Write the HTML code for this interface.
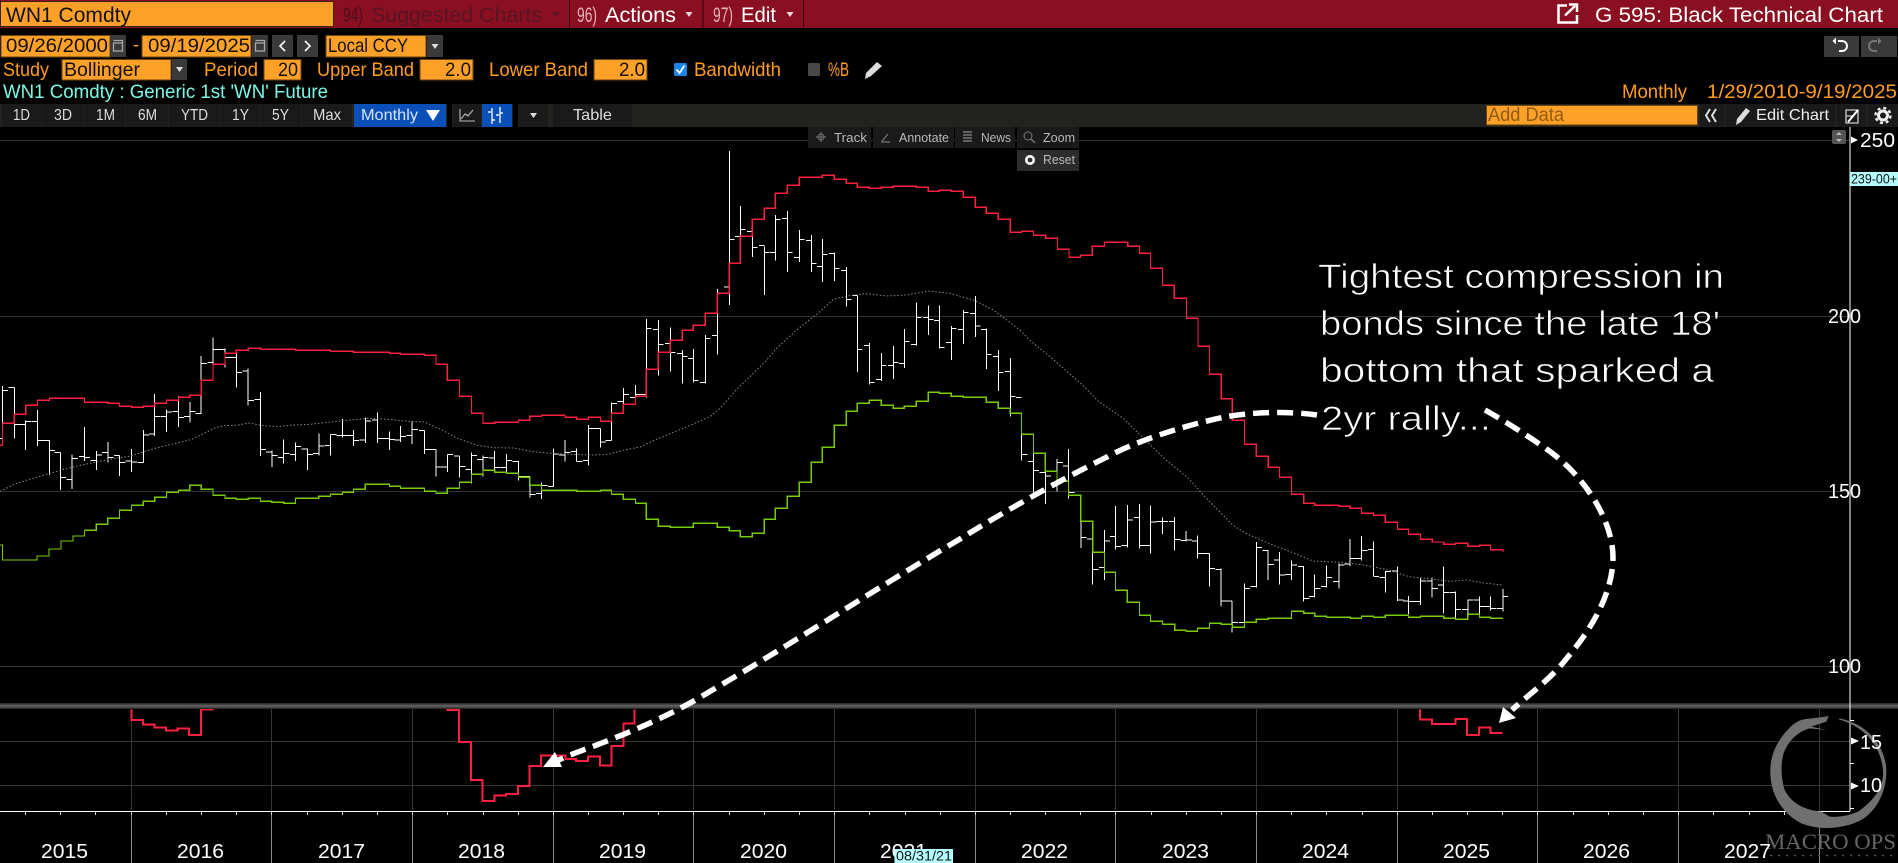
<!DOCTYPE html>
<html lang="en"><head><meta charset="utf-8"><title>G 595: Black Technical Chart</title>
<style>
html,body{margin:0;padding:0;background:#000;width:1898px;height:863px;overflow:hidden}
#w{width:1898px;height:863px;overflow:hidden;position:relative}
svg{display:block}
text{font-family:"Liberation Sans",Arial,sans-serif;white-space:pre}
.ns{fill:none;vector-effect:non-scaling-stroke;shape-rendering:crispEdges}
.bar{stroke:#fff;stroke-width:1}
.red{stroke:#ff1f3f;stroke-width:1.2}
.grn{stroke:#78cc00;stroke-width:1.2}
.sma{fill:none;vector-effect:non-scaling-stroke;stroke:#8a8a8a;stroke-width:1;stroke-dasharray:1.5 2}
.or{fill:#ff9d1e;font-size:19.5px}
.bk{fill:#111;font-size:19.5px}
.tb{fill:#ddd;font-size:16px}
.ov{fill:#b9b9b9;font-size:13px}
.yr{fill:#fff;font-size:20.5px}
.hw{fill:#fff;font-size:34px;stroke:#000;stroke-width:.7px;paint-order:fill stroke}
.inp{fill:#ffa028;stroke:#6b4510;stroke-width:1}
.btn{fill:#3a3a3a}
.tbb{fill:#1a1a1a}
</style></head><body><div id="w">
<svg width="1898" height="863" viewBox="0 0 1898 863" xmlns="http://www.w3.org/2000/svg">
<rect width="1898" height="863" fill="#000"/>

<!-- header -->
<rect x="0" y="0" width="1898" height="28" fill="#8a0f20"/>
<path d="M569.5 0V28M703 0V28M803.5 0V28" stroke="#2a0208" stroke-width="1"/>
<rect x="0.5" y="1.5" width="333" height="25" fill="#ffa028" stroke="#3a2206"/>
<text x="6" y="22" font-size="21" fill="#111" textLength="125" lengthAdjust="spacingAndGlyphs">WN1 Comdty</text>
<text x="343" y="22" font-size="21" fill="#4e0f1c" textLength="20" lengthAdjust="spacingAndGlyphs">94)</text>
<text x="371" y="22" font-size="21" fill="#571524" textLength="171" lengthAdjust="spacingAndGlyphs">Suggested Charts</text>
<path d="M552 12h8l-4 5z" fill="#5a1524"/>
<text x="577" y="22" font-size="21" fill="#e5b4bb" textLength="20" lengthAdjust="spacingAndGlyphs">96)</text>
<text x="605" y="22" font-size="21" fill="#fff" textLength="71" lengthAdjust="spacingAndGlyphs">Actions</text>
<path d="M685.500 12h7l-3.500 5z" fill="#e8d8da"/>
<text x="713" y="22" font-size="21" fill="#e5b4bb" textLength="20" lengthAdjust="spacingAndGlyphs">97)</text>
<text x="741" y="22" font-size="21" fill="#fff" textLength="35" lengthAdjust="spacingAndGlyphs">Edit</text>
<path d="M786.500 12h7l-3.500 5z" fill="#e8d8da"/>
<path d="M1567 5.500H1558.500V22.500H1577V15" fill="none" stroke="#fff" stroke-width="2.500"/>
<path d="M1565 15.500L1575 6M1569 4.500H1577V12" fill="none" stroke="#fff" stroke-width="2.500"/>
<text x="1595" y="22" font-size="21" fill="#fff" textLength="288" lengthAdjust="spacingAndGlyphs">G 595: Black Technical Chart</text>

<!-- row 2 -->
<rect x="1" y="35.500" width="109" height="21.500" class="inp"/>
<text x="6" y="52" class="bk" textLength="102" lengthAdjust="spacingAndGlyphs">09/26/2000</text>
<rect x="110" y="35" width="16" height="22" class="btn"/>
<path d="M113.500 43h9v8h-9zM113.500 40.500h9v2.500h-9" fill="none" stroke="#aaa" stroke-width="1.300"/>
<text x="133" y="51" class="or" textLength="6" lengthAdjust="spacingAndGlyphs">-</text>
<rect x="142" y="35.500" width="109" height="21.500" class="inp"/>
<text x="148" y="52" class="bk" textLength="102" lengthAdjust="spacingAndGlyphs">09/19/2025</text>
<rect x="252" y="35" width="16" height="22" class="btn"/>
<path d="M255.500 43h9v8h-9zM255.500 40.500h9v2.500h-9" fill="none" stroke="#aaa" stroke-width="1.300"/>
<rect x="272" y="35" width="21" height="22" class="btn"/>
<path d="M285 41l-5 5 5 5" fill="none" stroke="#fff" stroke-width="1.600"/>
<rect x="297" y="35" width="21" height="22" class="btn"/>
<path d="M305 41l5 5-5 5" fill="none" stroke="#fff" stroke-width="1.600"/>
<rect x="326" y="35.500" width="100" height="21.500" class="inp"/>
<text x="328" y="52" class="bk" textLength="80" lengthAdjust="spacingAndGlyphs">Local CCY</text>
<rect x="427" y="35" width="16" height="22" class="btn"/>
<path d="M431.500 44h7l-3.500 5z" fill="#ddd"/>

<!-- undo / redo -->
<rect x="1824" y="36" width="35" height="21" class="btn"/>
<rect x="1861" y="36" width="36" height="21" class="btn"/>
<path d="M1838 41h4a4.500 4.500 0 0 1 0 10h-3" fill="none" stroke="#fff" stroke-width="2"/>
<path d="M1836 37.500l-3.500 3.500 3.500 3.500z" fill="#fff"/>
<path d="M1877 41h-3a4.500 4.500 0 0 0 0 10h3" fill="none" stroke="#777" stroke-width="2"/>
<path d="M1878 37.500l3.500 3.500-3.500 3.500z" fill="#777"/>

<!-- row 3 -->
<text x="3" y="76" class="or" textLength="46" lengthAdjust="spacingAndGlyphs">Study</text>
<rect x="62" y="59.500" width="109" height="20.500" class="inp"/>
<text x="64" y="76" class="bk" textLength="76" lengthAdjust="spacingAndGlyphs">Bollinger</text>
<rect x="172" y="59" width="15" height="21" class="btn"/>
<path d="M176 67h7l-3.500 5z" fill="#ddd"/>
<text x="204" y="76" class="or" textLength="54" lengthAdjust="spacingAndGlyphs">Period</text>
<rect x="264" y="59.500" width="37" height="20.500" class="inp"/>
<text x="278" y="76" class="bk" textLength="20" lengthAdjust="spacingAndGlyphs">20</text>
<text x="317" y="76" class="or" textLength="97" lengthAdjust="spacingAndGlyphs">Upper Band</text>
<rect x="420" y="59.500" width="53" height="20.500" class="inp"/>
<text x="445" y="76" class="bk" textLength="26" lengthAdjust="spacingAndGlyphs">2.0</text>
<text x="489" y="76" class="or" textLength="99" lengthAdjust="spacingAndGlyphs">Lower Band</text>
<rect x="594" y="59.500" width="53" height="20.500" class="inp"/>
<text x="619" y="76" class="bk" textLength="26" lengthAdjust="spacingAndGlyphs">2.0</text>
<rect x="674" y="63" width="13" height="13" rx="1.500" fill="#1b86e6"/>
<path d="M676.500 69.500l3 3.500 5-7.500" fill="none" stroke="#fff" stroke-width="1.800"/>
<text x="694" y="76" class="or" textLength="87" lengthAdjust="spacingAndGlyphs">Bandwidth</text>
<rect x="808" y="63" width="12" height="13" rx="1.500" fill="#484848"/>
<text x="828" y="76" class="or" textLength="21" lengthAdjust="spacingAndGlyphs">%B</text>
<path d="M877 62l5 4-11 10-6 3 1-6z" fill="#ddd"/>

<!-- row 4 -->
<text x="3" y="98" font-size="19.500" fill="#7cf9e6" textLength="325" lengthAdjust="spacingAndGlyphs">WN1 Comdty : Generic 1st 'WN' Future</text>
<text x="1622" y="98" class="or" textLength="65" lengthAdjust="spacingAndGlyphs">Monthly</text>
<text x="1707" y="98" class="or" textLength="190" lengthAdjust="spacingAndGlyphs">1/29/2010-9/19/2025</text>

<!-- toolbar -->
<rect x="0" y="104" width="1898" height="23" fill="#22221e"/>
<rect x="2" y="104" width="39" height="23" class="tbb"/>
<rect x="42" y="104" width="41" height="23" class="tbb"/>
<rect x="84" y="104" width="41" height="23" class="tbb"/>
<rect x="126" y="104" width="42" height="23" class="tbb"/>
<rect x="169" y="104" width="50" height="23" class="tbb"/>
<rect x="220" y="104" width="39" height="23" class="tbb"/>
<rect x="260" y="104" width="41" height="23" class="tbb"/>
<rect x="302" y="104" width="50" height="23" class="tbb"/>
<rect x="354" y="104" width="92" height="23" fill="#0a50b8"/>
<rect x="447" y="104" width="5" height="23" fill="#000"/>
<rect x="453" y="104" width="28" height="23" class="tbb"/>
<rect x="482" y="104" width="30" height="23" fill="#0a50b8"/>
<rect x="513" y="104" width="5" height="23" fill="#000"/>
<rect x="519" y="104" width="29" height="23" class="tbb"/>
<rect x="553" y="104" width="79" height="23" class="tbb"/>
<text x="13" y="120" class="tb" textLength="17" lengthAdjust="spacingAndGlyphs">1D</text>
<text x="54" y="120" class="tb" textLength="18" lengthAdjust="spacingAndGlyphs">3D</text>
<text x="96" y="120" class="tb" textLength="19" lengthAdjust="spacingAndGlyphs">1M</text>
<text x="138" y="120" class="tb" textLength="19" lengthAdjust="spacingAndGlyphs">6M</text>
<text x="181" y="120" class="tb" textLength="27" lengthAdjust="spacingAndGlyphs">YTD</text>
<text x="232" y="120" class="tb" textLength="17" lengthAdjust="spacingAndGlyphs">1Y</text>
<text x="272" y="120" class="tb" textLength="17" lengthAdjust="spacingAndGlyphs">5Y</text>
<text x="313" y="120" class="tb" textLength="28" lengthAdjust="spacingAndGlyphs">Max</text>
<text x="361" y="120" class="tb" style="fill:#d4e4ff" textLength="57" lengthAdjust="spacingAndGlyphs">Monthly</text>
<path d="M426 110h14l-7 11z" fill="#fff"/>
<path d="M460 109v12h15M461 119l4-5 3 2 5-6" fill="none" stroke="#bbb" stroke-width="1.100"/>
<path d="M492 108v16M491 112h-3M492 120h3M500 107v16M499 115h-3M500 113h3" fill="none" stroke="#e8f0ff" stroke-width="1.400"/>
<path d="M530 113h7l-3.500 5z" fill="#ddd"/>
<text x="573" y="120" class="tb" textLength="39" lengthAdjust="spacingAndGlyphs">Table</text>

<rect x="1486.500" y="105.500" width="211" height="19.500" fill="#ffa028" stroke="#6b4510"/>
<text x="1488" y="121" font-size="19" fill="#8e5c12" textLength="76" lengthAdjust="spacingAndGlyphs">Add Data</text>
<rect x="1700" y="104" width="24" height="23" class="tbb"/>
<path d="M1710 109l-4 6.500 4 6.500M1716 109l-4 6.500 4 6.500" fill="none" stroke="#ddd" stroke-width="2"/>
<rect x="1725.500" y="104" width="110" height="23" class="tbb"/>
<path d="M1746 108l4 3-9 11-5 3 1-6z" fill="#ddd"/>
<text x="1756" y="120" class="tb" style="fill:#eee" textLength="73" lengthAdjust="spacingAndGlyphs">Edit Chart</text>
<rect x="1837" y="104" width="29" height="23" class="tbb"/>
<rect x="1868" y="104" width="30" height="23" class="tbb"/>
<path d="M1846 110h12v13h-12zM1846 116h6" fill="none" stroke="#ccc" stroke-width="1.300"/>
<path d="M1848 122l10-12" stroke="#fff" stroke-width="2"/>
<circle cx="1883" cy="115.500" r="4.500" fill="none" stroke="#eee" stroke-width="3"/>
<circle cx="1883" cy="115.500" r="7.500" fill="none" stroke="#eee" stroke-width="2.400" stroke-dasharray="3 2.900"/>

<!-- grid -->
<g stroke="#353535" stroke-width="1" shape-rendering="crispEdges">
<path d="M0 140.500H1850M0 316.500H1850M0 491.500H1850M0 666.500H1850M0 741.500H1850M0 785.500H1850"/>
<path d="M131.500 708V811M271.500 708V811M412.500 708V811M553.500 708V811M693.500 708V811M834.500 708V811M975.500 708V811M1115.500 708V811M1256.500 708V811M1397.500 708V811M1537.500 708V811M1678.500 708V811M1819.500 708V811"/>
</g>
<path d="M131.500 811V863M271.500 811V863M412.500 811V863M553.500 811V863M693.500 811V863M834.500 811V863M975.500 811V863M1115.500 811V863M1256.500 811V863M1397.500 811V863M1537.500 811V863M1678.500 811V863M1819.500 811V863" stroke="#8a8a8a" stroke-width="1" shape-rendering="crispEdges"/>

<!-- overlay buttons -->
<g>
<rect x="808" y="127" width="63" height="21" fill="#1a1a1a"/>
<rect x="873" y="127" width="81" height="21" fill="#1a1a1a"/>
<rect x="955" y="127" width="60" height="21" fill="#1a1a1a"/>
<rect x="1017" y="127" width="62" height="21" fill="#1a1a1a"/>
<rect x="1017" y="150" width="62" height="21" fill="#2c2c2c"/>
<path d="M821 132v10M816 137h10" stroke="#777" stroke-width="1"/><circle cx="821" cy="137" r="3" fill="none" stroke="#777"/>
<path d="M881 142h9M882 141l6-7" stroke="#777" stroke-width="1.200"/>
<path d="M963 132h9M963 135h9M963 138h9M963 141h9" stroke="#777" stroke-width="1.500"/>
<circle cx="1028" cy="136" r="4" fill="none" stroke="#777"/><path d="M1031 139l4 4" stroke="#777" stroke-width="1.300"/>
<text x="834" y="142" class="ov" textLength="33" lengthAdjust="spacingAndGlyphs">Track</text>
<text x="899" y="142" class="ov" textLength="50" lengthAdjust="spacingAndGlyphs">Annotate</text>
<text x="981" y="142" class="ov" textLength="30" lengthAdjust="spacingAndGlyphs">News</text>
<text x="1043" y="142" class="ov" textLength="32" lengthAdjust="spacingAndGlyphs">Zoom</text>
<circle cx="1030" cy="160" r="3.700" fill="none" stroke="#fff" stroke-width="2.600"/>
<text x="1043" y="164" class="ov" textLength="32" lengthAdjust="spacingAndGlyphs">Reset</text>
</g>
<rect x="1832" y="130" width="14" height="14" rx="2" fill="#555"/>
<path d="M1836 135l3-3 3 3zM1836 139l3 3 3-3z" fill="#bbb"/>

<!-- price bars: segment A -->
<g transform="translate(0,320) scale(.40816,.33333)">
<path class="ns bar" d="M6 198V378M-8 355H6M6 211H20M35 202V356M21 202H35M35 313H49M63 302V390M49 313H63M63 304H77M92 270V378M78 304H92M92 361H106M121 360V465M107 361H121M121 391H135M148 398V510M134 398H148M148 472H162M177 403V507M163 479H177M177 415H191M207 321V423M193 409H207M207 412H221M236 393V450M222 422H236M236 405H250M264 366V427M250 397H264M264 412H278M293 407V468M279 407H293M293 428H307M322 387V456M308 423H322M322 426H336M351 330V428M337 428H351M351 345H365M379 222V348M365 342H379M379 290H393M408 268V336M394 290H408M408 276H422M437 228V321M423 274H437M437 293H451M465 246V308M451 290H465M465 274H479M493 108V282M479 281H493M493 130H507M522 52V144M508 127H522M522 88H536M551 85V143M537 88H551M551 113H565M579 100V203M565 113H579M579 158H593M608 145V257M594 153H608M608 241H622M638 216V408M624 238H638M638 388H652M666 392V441M652 396H666M666 407H680M695 358V430M681 412H695M695 400H709M724 368V423M710 404H724M724 380H738M753 385V450M739 387H753M753 404H767M781 340V406M767 401H781M781 378H795M810 343V407M796 376H810M810 344H824M839 297V353M825 346H839M839 346H853M866 330V378M852 346H866M866 362H880M895 293V369M881 360H895M895 303H909M925 277V369M911 300H925M925 355H939M954 335V390M940 355H954M954 358H968M981 318V366M967 360H981M981 349H995M1010 305V372M996 346H1010M1010 328H1024M1040 331V402M1026 331H1040M1040 388H1054M1068 388V470M1054 388H1068M1068 441H1082M1096 403V456M1082 441H1096M1096 403H1110M1126 408V473M1112 408H1126M1126 439H1140M1155 397V490M1141 448H1155M1155 407H1169M1183 406V470M1169 418H1183M1183 412H1197M1212 393V453M1198 414H1212M1212 442H1226M1241 402V462M1227 442H1241M1241 422H1255M1270 423V482M1256 425H1270M1270 469H1284M1298 470V532M1284 470H1298M1298 524H1312M1327 487V537M1313 520H1327M1327 496H1341M1356 385V499M1342 499H1356M1356 402H1370M1384 360V425M1370 405H1384M1384 397H1398M1413 385V425M1399 394H1413M1413 425H1427M1442 315V437M1428 422H1442M1442 325H1456M1471 325V383M1457 325H1471M1471 366H1485M1498 247V362M1484 362H1498M1498 250H1512M1527 204V280M1513 244H1527M1527 223H1541M1557 195V255M1543 232H1557M1557 224H1571"/>
</g>
<!-- segment B -->
<g transform="translate(620,310) scale(.33333)">
<path class="ns bar" d="M79 27V263M63 253H79M79 55H95M115 30V197M99 58H115M115 103H131M151 52V185M135 100H151M151 127H167M187 120V221M171 130H187M187 139H203M220 117V218M204 146H220M220 212H236M256 75V221M240 218H256M256 85H272M292 -63V134M276 76H292M292 -50H308M748 99V224M732 106H748M748 217H764M784 129V213M768 208H784M784 166H800M820 108V207M804 166H820M820 157H836M853 57V174M837 160H853M853 94H869M889 -23V107M873 103H889M889 22H905M925 -13V75M909 22H925M925 28H941M958 -13V116M942 32H958M958 113H974M994 48V150M978 97H994M994 55H1010M1030 0V102M1014 58H1030M1030 7H1046M1066 -42V81M1050 10H1066M1066 48H1082M1099 55V177M1083 58H1099M1099 133H1115M1135 120V243M1119 139H1135M1135 187H1151M1171 144V320M1155 184H1171M1171 259H1187"/>
</g>
<g transform="translate(620,140) scale(.33333)">
<path class="ns bar" d="M328 33V495M312 441H328M328 298H344M361 198V370M345 289H361M361 268H377M397 240V351M381 274H397M397 322H413M433 320V465M417 316H433M433 338H449M466 225V362M450 338H466M466 239H482M502 213V396M486 236H502M502 338H518M538 270V366M522 353H538M538 298H554M574 285V396M558 301H574M574 370H590M607 297V426M591 380H607M607 343H623M643 337V423M627 340H643M643 385H659M679 381V500M663 391H679M679 479H695M712 466V696M696 467H712M712 628H728"/>
</g>
<!-- segment C -->
<g transform="translate(960,340) scale(.40816,.33333)">
<path class="ns bar" d="M151 219V362M137 172H151M151 343H165M180 340V458M166 365H180M180 392H194M209 392V492M195 397H209M209 408H223M238 357V455M224 428H238M238 367H252M266 327V475M252 378H266M266 458H280M296 470V624M282 467H296M296 593H310M325 544V733M311 597H325M325 688H339M354 570V720M340 682H354M354 603H368M381 498V628M367 590H381M381 620H395M410 495V622M396 617H410M410 540H424M440 492V625M426 533H440M440 617H454M467 497V640M453 617H467M467 546H481M496 532V582M482 545H496M496 545H510M526 531V632M512 544H526M526 598H540M554 573V605M540 601H554M554 600H568M582 586V655M568 603H582M582 640H596M611 640V740M597 640H611M611 685H625M640 686V800M626 688H640M640 783H654M667 783V878M653 783H667M667 847H681M697 730V862M683 848H697M697 745H711M726 606V743M712 740H726M726 623H740M755 630V720M741 632H755M755 673H769M783 636V733M769 660H783M783 705H797M812 662V720M798 703H812M812 675H826M842 678V785M828 680H842M842 775H856M869 703V773M855 770H869M869 745H883M898 676V743M884 740H898M898 712H912M928 670V746M914 725H928M928 675H942M956 597V678M942 672H956M956 655H970M984 588V662M970 655H984M984 632H998M1013 605V708M999 628H1013M1013 710H1027M1042 693V757M1028 713H1042M1042 695H1056M1072 680V783M1058 693H1072M1072 780H1086M1099 768V822M1085 783H1099M1099 785H1113M1128 712V795M1114 785H1128M1128 723H1142M1157 712V773M1143 723H1157M1157 745H1171M1185 679V820M1171 735H1185M1185 757H1199M1214 755V835M1200 757H1214M1214 808H1228M1244 778V822M1230 808H1244M1244 780H1258M1273 770V826M1259 780H1273M1273 800H1287M1300 770V812M1286 800H1300M1300 805H1314M1330 747V815M1316 805H1330M1330 769H1343"/>
</g>

<!-- SMA dotted -->
<g transform="translate(0,320) scale(.40816,.33333)">
<path class="sma" d="M0 514L40 490L100 468L150 450L200 435L260 420L320 408L380 385L430 370L470 358L500 340L530 322L550 317L580 316L610 309L640 316L680 320L720 315L760 313L810 306L860 300L900 295L950 298L1000 304L1040 306L1080 328L1120 355L1170 376L1210 383L1260 384L1300 394L1350 400L1400 403L1450 405L1490 403L1530 390L1568 381"/>
</g>
<g transform="translate(620,310) scale(.33333)">
<path class="sma" d="M60 411L100 392L160 367L220 342L270 320L300 295L350 238L400 190L440 150L470 115L530 60L600 5L640 -32L680 -42L740 -49L800 -42L860 -45L925 -57L990 -50L1060 -30L1120 0L1160 30L1200 60"/>
</g>
<g transform="translate(960,340) scale(.40816,.33333)">
<path class="sma" d="M147 -30L170 0L230 60L300 135L340 185L400 235L450 295L500 355L560 415L600 470L640 520L670 557L700 580L760 612L820 640L865 663L930 667L990 675L1050 690L1100 710L1160 718L1200 724L1240 720L1290 730L1330 735"/>
</g>

<!-- green band -->
<path class="ns grn" d="M0 545H2.400V560H37V556H49V549H61V541H73V536H84.500V530.300"/>
<g transform="translate(0,320) scale(.40816,.33333)">
<path class="ns grn" d="M207 631H236V613H264V595H293V571H322V556H351V544H379V532H408V517H437V511H465V496H493V508H522V526H551V535H579V538H608V535H638V544H666V547H695V550H724V535H781V529H810V523H839V517H866V508H895V493H954V499H981V505H1040V514H1068V520H1096V505H1126V487H1155V463H1183V451H1212V457H1241V460H1270V472H1298V496H1327V511H1413V514H1471V511H1498V523H1527V538H1557V550H1568"/>
</g>
<g transform="translate(620,310) scale(.33333)">
<path class="ns grn" d="M46 580H79V628H115V649H151V652H220V640H292V652H328V662H361V680H397V670H433V628H466V595H502V559H538V517H574V457H607V412H643V346H679V304H712V280H748V271H784V286H820V295H853V289H889V274H925V247H958V250H994V259H1030V262H1099V277H1135V295H1171V310H1180"/>
</g>
<g transform="translate(960,340) scale(.40816,.33333)">
<path class="ns grn" d="M124 220H151V283H180V340H209V394H238V424H266V466H296V544H325V637H354V697H381V751H410V787H440V826H467V844H496V853H526V871H554V874H582V865H611V850H640V853H667V862H697V847H726V838H755V835H812V814H842V820H869V829H898V832H956V835H984V829H1013V832H1042V826H1099V832H1128V829H1185V835H1214V838H1244V823H1273V832H1300V835H1330"/>
</g>

<!-- red band -->
<g transform="translate(0,320) scale(.40816,.33333)">
<path class="ns red" d="M0 376H6V310H35V283H63V256H92V241H121V235H207V247H264V250H293V259H322V262H351V259H379V250H408V241H437V232H465V226H493V181H522V133H551V100H579V91H608V85H638V88H724V91H810V94H866V97H954V100H981V103H1040V106H1068V133H1096V181H1126V229H1155V280H1183V310H1212V307H1270V301H1298V289H1327V286H1384V292H1413V298H1442V292H1471V304H1498V280H1527V253H1557V229"/>
</g>
<g transform="translate(620,310) scale(.33333)">
<path class="ns red" d="M46 259H79V178H115V127H151V91H187V61H220V46H256V10H292V-50"/>
</g>
<g transform="translate(620,140) scale(.33333)">
<path class="ns red" d="M292 460H328V370H361V289H397V238H433V205H466V160H502V136H538V112H607V106H643V118H679V130H712V142H748V145H784V142H820V139H889V142H925V154H958V151H994V154H1030V172H1066V202H1099V220H1135V238H1171V277H1200"/>
</g>
<g transform="translate(620,130) scale(.40816,.33333)">
<path class="ns red" d="M957 307H984V304H1013V316H1043V325H1072V358H1100V382H1128V376H1157V349H1187V337H1244V349H1273V370H1300V415H1329V466H1358V505H1388V565H1416V649H1444"/>
</g>
<g transform="translate(960,340) scale(.40816,.33333)">
<path class="ns red" d="M582 18H611V103H640V176H667V241H697V313H726V349H755V382H783V412H812V463H842V490H869V496H928V499H956V505H984V520H1013V526H1042V547H1072V568H1099V583H1128V598H1157V606H1185V613H1214V610H1244V619H1273V616H1300V629H1330V636"/>
</g>

<!-- lower panel red -->
<g transform="translate(0,690) scale(.60606,.33333)">
<path class="ns" stroke="#ff1f3f" stroke-width="2" d="M217 58V90H236V104H255V113H274V122H293V116H312V135H332V58H352"/>
<path class="ns" stroke="#ff1f3f" stroke-width="2" d="M737 60H757V156H777V270H796V333H816V317H835V312H855V288H874V228H893V197H933V207H950V213H970V200H990V226H1009V168H1029V101H1047V58"/>
</g>
<g transform="translate(948,690) scale(.60606,.33333)">
<path class="ns" stroke="#ff1f3f" stroke-width="2" d="M779 58V88H799V102H837V87H856V135H876V113H895V129H915"/>
</g>

<!-- separator & axes -->
<rect x="0" y="703" width="1898" height="6" fill="#2c2c2c"/>
<rect x="0" y="704.500" width="1898" height="3" fill="#5a5a5a"/>
<path d="M0 811.500H1850" stroke="#fff" stroke-width="1" shape-rendering="crispEdges"/>
<path d="M1850 127V811" stroke="#fff" stroke-width="1.200" shape-rendering="crispEdges"/>
<path d="M25.500 812v3M60.500 812v3M95.500 812v3M131.500 812v3M166.500 812v3M201.500 812v3M236.500 812v3M271.500 812v3M307.500 812v3M342.500 812v3M377.500 812v3M412.500 812v3M447.500 812v3M483.500 812v3M518.500 812v3M553.500 812v3M588.500 812v3M623.500 812v3M658.500 812v3M693.500 812v3M729.500 812v3M764.500 812v3M799.500 812v3M834.500 812v3M869.500 812v3M905.500 812v3M940.500 812v3M975.500 812v3M1010.500 812v3M1045.500 812v3M1080.500 812v3M1115.500 812v3M1151.500 812v3M1186.500 812v3M1221.500 812v3M1256.500 812v3M1291.500 812v3M1326.500 812v3M1362.500 812v3M1397.500 812v3M1432.500 812v3M1467.500 812v3M1502.500 812v3M1537.500 812v3M1573.500 812v3M1608.500 812v3M1643.500 812v3M1678.500 812v3M1713.500 812v3M1749.500 812v3M1784.500 812v3M1819.500 812v3" stroke="#ddd" stroke-width="1" shape-rendering="crispEdges"/>

<!-- logo -->
<g transform="translate(1698,690) scale(.33333)">
<path fill="#707070" d="M392 78C360 84 335 85 318 88C305 90 296 96 282 106C235 150 215 200 217 250C218 310 250 370 310 400C360 420 430 420 490 390C540 360 565 300 565 245C565 180 520 105 425 85L422 88C510 112 552 180 555 245C557 290 530 330 480 365C450 378 420 382 395 380L370 365C320 360 280 340 260 300C248 260 248 220 257 190C272 150 300 125 335 115L385 120L340 110L385 95Z"/>
</g>
<text x="1765" y="849" font-size="22" fill="#666" style="font-family:'Liberation Serif',serif" textLength="131" lengthAdjust="spacingAndGlyphs">MACRO OPS</text>
<path d="M1770 855.500H1895" stroke="#555" stroke-width="1.500" stroke-dasharray="2 6"/>

<!-- axis labels -->
<path d="M1851 136.500l7 3.500-7 3.500z" fill="#fff"/>
<text x="1860" y="147" font-size="20" fill="#fff" textLength="35" lengthAdjust="spacingAndGlyphs">250</text>
<text x="1828" y="323" font-size="20" fill="#fff" textLength="33" lengthAdjust="spacingAndGlyphs">200</text>
<text x="1828" y="498" font-size="20" fill="#fff" textLength="33" lengthAdjust="spacingAndGlyphs">150</text>
<text x="1828" y="673" font-size="20" fill="#fff" textLength="33" lengthAdjust="spacingAndGlyphs">100</text>
<rect x="1850" y="172" width="48" height="14" fill="#b4ffff"/>
<text x="1851" y="183.500" font-size="13.500" fill="#111" textLength="46" lengthAdjust="spacingAndGlyphs">239-00+</text>
<path d="M1851 737.500l8 3.500-8 3.500zM1851 782.500l8 3.500-8 3.500z" fill="#fff"/>
<path d="M1850 720.500h4M1850 763.500h4M1850 808.500h4" stroke="#fff"/>
<text x="1860" y="749" font-size="20" fill="#fff" textLength="22" lengthAdjust="spacingAndGlyphs">15</text>
<text x="1860" y="792" font-size="20" fill="#fff" textLength="22" lengthAdjust="spacingAndGlyphs">10</text>

<!-- years -->
<text x="41" y="858" class="yr" textLength="47" lengthAdjust="spacingAndGlyphs">2015</text>
<text x="177" y="858" class="yr" textLength="47" lengthAdjust="spacingAndGlyphs">2016</text>
<text x="318" y="858" class="yr" textLength="47" lengthAdjust="spacingAndGlyphs">2017</text>
<text x="458" y="858" class="yr" textLength="47" lengthAdjust="spacingAndGlyphs">2018</text>
<text x="599" y="858" class="yr" textLength="47" lengthAdjust="spacingAndGlyphs">2019</text>
<text x="740" y="858" class="yr" textLength="47" lengthAdjust="spacingAndGlyphs">2020</text>
<text x="880" y="858" class="yr" textLength="47" lengthAdjust="spacingAndGlyphs">2021</text>
<text x="1021" y="858" class="yr" textLength="47" lengthAdjust="spacingAndGlyphs">2022</text>
<text x="1162" y="858" class="yr" textLength="47" lengthAdjust="spacingAndGlyphs">2023</text>
<text x="1302" y="858" class="yr" textLength="47" lengthAdjust="spacingAndGlyphs">2024</text>
<text x="1443" y="858" class="yr" textLength="47" lengthAdjust="spacingAndGlyphs">2025</text>
<text x="1583" y="858" class="yr" textLength="47" lengthAdjust="spacingAndGlyphs">2026</text>
<text x="1724" y="858" class="yr" textLength="47" lengthAdjust="spacingAndGlyphs">2027</text>
<rect x="894.500" y="849" width="58.500" height="14" fill="#b4ffff"/>
<text x="896" y="860.500" font-size="13.500" fill="#111" textLength="56" lengthAdjust="spacingAndGlyphs">08/31/21</text>

<!-- annotation arrows -->
<g fill="none" stroke="#fff" stroke-width="5.500">
<path stroke-dasharray="16 8" d="M1317 415C1290 411 1250 412 1225 417C1180 426 1130 444 1107 457C1060 480 1000 514 960 539C880 586 790 645 709 692C660 722 610 740 570 755L552 763"/>
<path stroke-dasharray="16 8" d="M1485 410C1510 424 1540 444 1552 453C1590 482 1613 525 1613 557C1613 590 1595 625 1567 658C1550 680 1528 695 1512 710"/>
</g>
<path fill="#fff" d="M543 767L555 752L562 767Z"/>
<path fill="#fff" d="M1499 723L1503 707L1516 718Z"/>

<!-- handwritten note -->
<text x="1318" y="288" class="hw" textLength="406" lengthAdjust="spacingAndGlyphs">Tightest compression in</text>
<text x="1320" y="335" class="hw" textLength="400" lengthAdjust="spacingAndGlyphs">bonds since the late 18'</text>
<text x="1320" y="382" class="hw" textLength="394" lengthAdjust="spacingAndGlyphs">bottom that sparked a</text>
<text x="1321" y="430" class="hw" textLength="170" lengthAdjust="spacingAndGlyphs">2yr rally...</text>
</svg>
</div></body></html>
